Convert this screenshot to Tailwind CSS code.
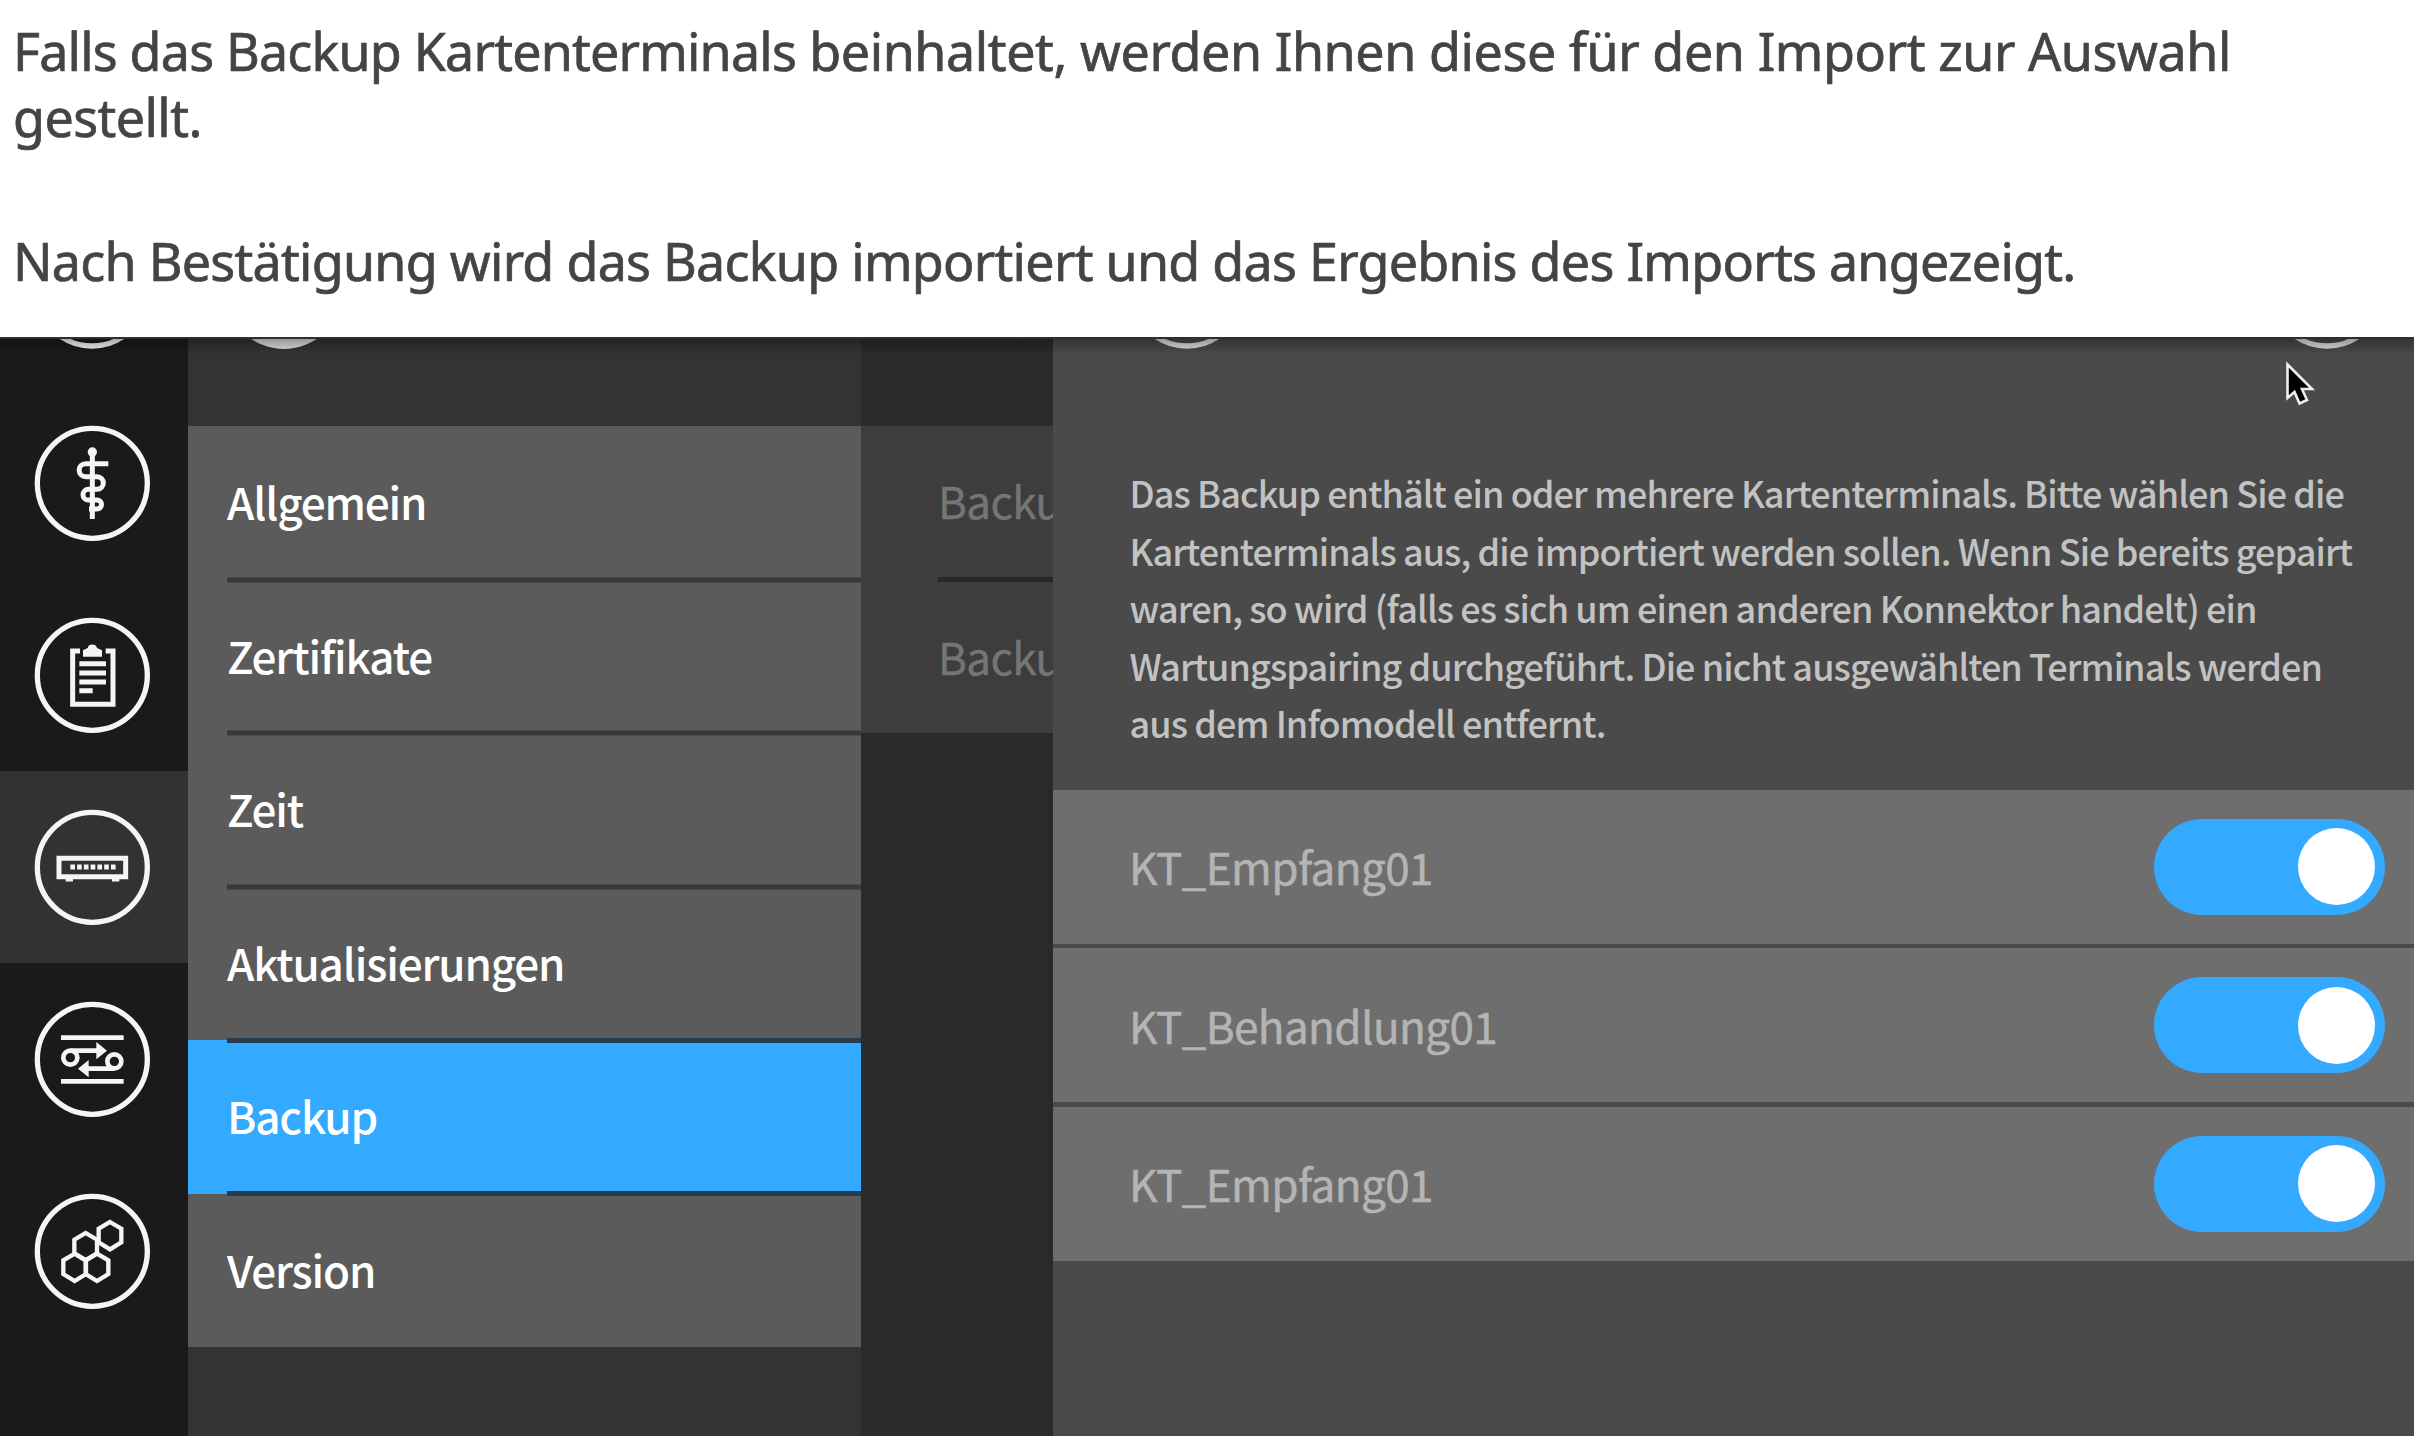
<!DOCTYPE html>
<html lang="de">
<head>
<meta charset="utf-8">
<title>Backup</title>
<script src="https://cdn.jsdelivr.net/npm/@tailwindcss/browser@4"></script>
</head>
<body class="w-[2414px] h-[1436px] overflow-hidden flex flex-col bg-white">
<header class="h-[337px] shrink-0 pt-[18px] pl-[13px] font-['Noto_Sans',sans-serif] text-[52px] leading-[66px] tracking-[-0.56px] text-[#444444] [-webkit-text-stroke:0.7px_#444444]">
  <p class="whitespace-nowrap"><span class="tracking-[-0.8px]">Falls das Backup Kartenterminals</span><span class="tracking-[-0.42px]"> beinhaltet, werden Ihnen diese für den Import zur Auswahl</span><br>gestellt.</p>
  <p class="mt-[78px] whitespace-nowrap tracking-[-0.73px]">Nach Bestätigung wird das Backup importiert und das Ergebnis des Imports angezeigt.</p>
</header>
<div class="h-[2px] shrink-0 bg-[#2f2f2f]"></div>
<main class="relative flex-1 flex overflow-hidden bg-[#2a2a2a] font-['Noto_Sans_CJK_SC',sans-serif] text-[44px] tracking-[-0.6px]">
  <nav class="w-[188px] shrink-0 bg-[#1a1a1a] flex flex-col text-[#f5f5f5]">
    <div class="h-[48px] shrink-0 flex items-end pl-[34px] pb-[38px]">
      <svg class="w-[116px] h-[116px] shrink-0" viewBox="-174 -174 348 348" fill="none" stroke="currentColor" stroke-width="16"><circle r="165"/></svg>
    </div>
    <div class="h-[192px] shrink-0 flex items-center pl-[34px]">
      <svg class="w-[116px] h-[116px]" viewBox="-175 -175 348 348" fill="none" stroke="currentColor" stroke-width="15"><circle r="165" stroke-width="16"/><circle cy="-94" r="14" fill="currentColor" stroke="none"/><path d="M0-95V107M48-59H-20a19.500 19.500 0 0 0 0 39H14a19 19 0 0 1 0 38H-12a16 16 0 0 0 0 32H14a13 13 0 0 1 0 27H-10"/></svg>
    </div>
    <div class="h-[192px] shrink-0 flex items-center pl-[34px]">
      <svg class="w-[116px] h-[116px]" viewBox="-175 -175 348 348" fill="none" stroke="currentColor" stroke-width="15"><circle r="165" stroke-width="16"/><path d="M-37-73H-59V87H62V-73H40M-39-35H41M-39-7H41M-39 20H41M-39 46H1"/><path d="M-28-56V-75L-14-82C-12-96 12-96 14-82L29-75V-56Z" fill="currentColor" stroke="none"/></svg>
    </div>
    <div class="h-[192px] shrink-0 flex items-center pl-[34px] bg-[#323232]">
      <svg class="w-[116px] h-[116px]" viewBox="-175 -175 348 348" fill="none" stroke="currentColor" stroke-width="15"><circle r="165" stroke-width="16"/><path d="M-100-27H100V28H-100Z"/><path d="M-80 38H-58M59 38H81" stroke-width="9"/><path d="M-66-1H70" stroke-dasharray="14 6.300"/></svg>
    </div>
    <div class="h-[192px] shrink-0 flex items-center pl-[34px]">
      <svg class="w-[116px] h-[116px]" viewBox="-175 -175 348 348" fill="none" stroke="currentColor" stroke-width="14"><circle r="165" stroke-width="16"/><path d="M-94-65H94M-94 66H94M-66-26H15M66 28H-15"/><circle cx="-66" cy="-5" r="21"/><circle cx="66" cy="6" r="21"/><path d="M44-26 12-52V0ZM-43 28-11 2V54Z" fill="currentColor" stroke="none"/></svg>
    </div>
    <div class="h-[192px] shrink-0 flex items-center pl-[34px]">
      <svg class="w-[116px] h-[116px]" viewBox="-175 -175 348 348" fill="none" stroke="currentColor" stroke-width="13"><circle r="165" stroke-width="16"/><path id="hex" d="M53-88 87-68V-27L53-6 19-27V-68Z"/><use href="#hex" x="-73" y="33"/><use href="#hex" x="-106" y="95"/><use href="#hex" x="-39" y="95"/></svg>
    </div>
  </nav>
  <section class="w-[673px] shrink-0 bg-[#333333] flex flex-col">
    <div class="h-[87px] shrink-0 flex items-end pl-[38px] pb-[77px]"><div class="size-[116px] rounded-full bg-[#dddddd] shrink-0"></div></div>
    <ul class="grid grid-rows-6 h-[921px] bg-[#5b5b5b] text-white font-medium leading-[60px] tracking-[-1.150px] [&>li]:flex [&>li]:items-center [&>li]:pl-[39px] [&>li]:pb-[3.500px]">
      <li>Allgemein</li>
      <li>Zertifikate</li>
      <li>Zeit</li>
      <li>Aktualisierungen</li>
      <li class="bg-[#33aaff]">Backup</li>
      <li>Version</li>
    </ul>
    <div class="-mt-[921px] grid grid-rows-6 h-[921px] pl-[39px] z-10">
      <i class="self-end h-[5px] bg-[#383838] translate-y-[2.500px]"></i><i class="self-end h-[5px] bg-[#383838] translate-y-[2.500px]"></i><i class="self-end h-[5px] bg-[#383838] translate-y-[2.500px]"></i><i class="self-end h-[5px] bg-[#263c4c] translate-y-[3px]"></i><i class="self-end h-[5px] bg-[#263c4c] translate-y-[2px]"></i>
    </div>
  </section>
  <section class="w-[192px] shrink-0 overflow-hidden pt-[87px]">
    <ul class="h-[307px] bg-[#3d3d3d] text-[#757575] [-webkit-text-stroke:0.4px_#757575] leading-[60px] flex flex-col pl-[77px] whitespace-nowrap">
      <li class="h-[151px] pb-[3px] flex items-center">Backup</li>
      <li class="h-[5px] bg-[#292929] shrink-0"></li>
      <li class="h-[151px] pb-[3px] flex items-center">Backup</li>
    </ul>
  </section>
  <section class="flex-1 bg-[#4a4a4a] flex flex-col">
    <div class="h-[125px] shrink-0 flex items-end justify-between pl-[76px] pr-[29px] pb-[115px] text-[#dddddd]">
      <svg class="w-[116px] h-[116px] shrink-0" viewBox="-174 -174 348 348" fill="none" stroke="currentColor" stroke-width="16"><circle r="165"/></svg>
      <svg class="w-[116px] h-[116px] shrink-0" viewBox="-174 -174 348 348" fill="none" stroke="currentColor" stroke-width="16"><circle r="165"/></svg>
    </div>
    <p class="h-[326px] shrink-0 pl-[76.500px] whitespace-nowrap font-medium text-[36px] leading-[57.500px] tracking-[-0.92px] text-[#c2c2c2]">Das Backup enthält ein oder mehrere Kartenterminals. Bitte wählen Sie die<br>Kartenterminals aus, die importiert werden sollen. Wenn Sie bereits gepairt<br>waren, so wird (falls es sich um einen anderen Konnektor handelt) ein<br>Wartungspairing durchgeführt. Die nicht ausgewählten Terminals werden<br>aus dem Infomodell entfernt.</p>
    <ul class="flex flex-col gap-[4.800px] leading-[60px] text-[#b4b4b4] [&>li]:h-[153.700px] [&>li]:bg-[#6e6e6e] [&>li]:flex [&>li]:items-center [&>li]:justify-between [&>li]:pl-[76px] [&>li]:pr-[29px]">
      <li><span class="pb-px [-webkit-text-stroke:0.5px_#b4b4b4]">KT_Empfang01</span><div class="w-[231px] h-[96px] rounded-full bg-[#33aaff] flex items-center justify-end pr-[10px]"><div class="size-[77px] rounded-full bg-white"></div></div></li>
      <li><span class="pb-px [-webkit-text-stroke:0.5px_#b4b4b4]">KT_Behandlung01</span><div class="w-[231px] h-[96px] rounded-full bg-[#33aaff] flex items-center justify-end pr-[10px]"><div class="size-[77px] rounded-full bg-white"></div></div></li>
      <li><span class="pb-px [-webkit-text-stroke:0.5px_#b4b4b4]">KT_Empfang01</span><div class="w-[231px] h-[96px] rounded-full bg-[#33aaff] flex items-center justify-end pr-[10px]"><div class="size-[77px] rounded-full bg-white"></div></div></li>
    </ul>
  </section>
  <div class="absolute inset-x-0 top-0 h-[16px] bg-linear-to-b from-black/30 to-transparent z-20"></div>
  <svg class="absolute left-[2284px] top-[21px] w-[32px] h-[46px] z-30" viewBox="0 0 32 46"><path d="M3.500 4.500V38L10.500 32 15.500 43.500 23 40 18 29H28Z" fill="#000" stroke="#eee" stroke-width="2.600"/></svg>
</main>
</body>
</html>
